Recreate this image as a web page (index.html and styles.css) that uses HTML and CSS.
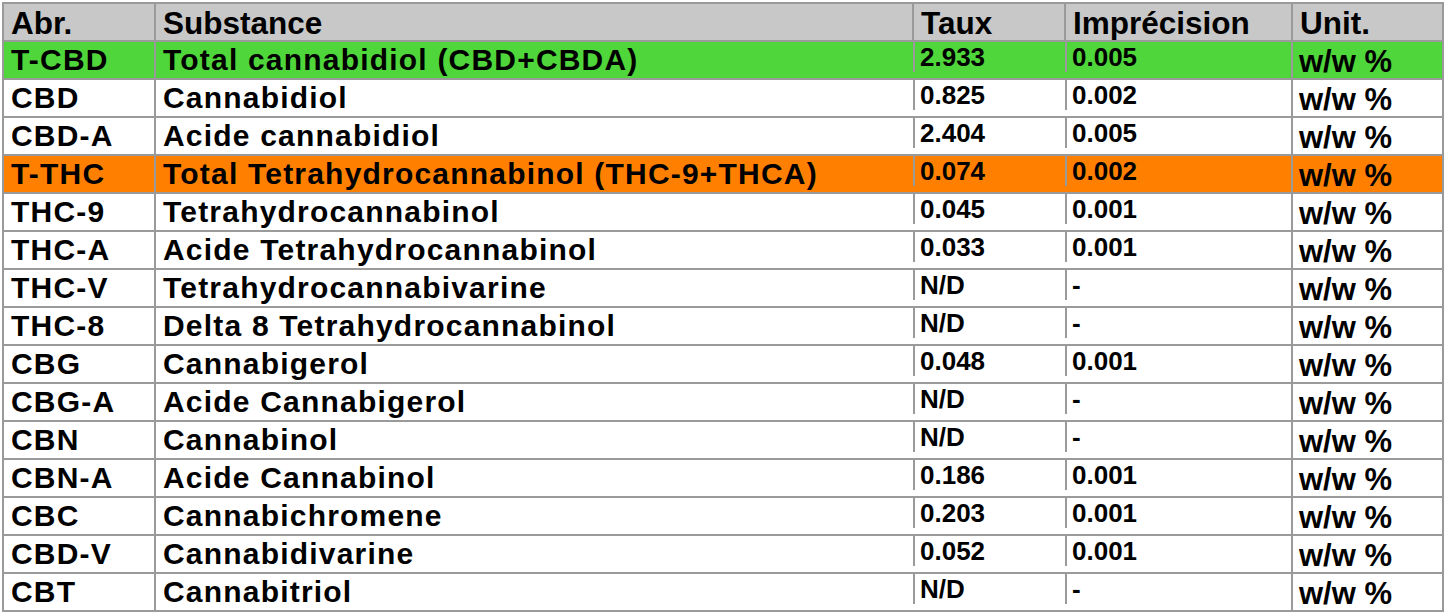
FILE: index.html
```html
<!DOCTYPE html>
<html lang="fr">
<head>
<meta charset="utf-8">
<title>Cannabinoïdes</title>
<link rel="stylesheet" href="styles.css">
</head>
<body>
<table class="results">
  <colgroup>
    <col class="c-abr">
    <col class="c-sub">
    <col class="c-taux">
    <col class="c-imp">
    <col class="c-unit">
  </colgroup>
  <thead>
    <tr class="head">
      <th>Abr.</th><th>Substance</th><th>Taux</th><th>Imprécision</th><th>Unit.</th>
    </tr>
  </thead>
  <tbody>
    <tr class="green"><td class="txt">T-CBD</td><td class="txt">Total cannabidiol (CBD+CBDA)</td><td class="num">2.933</td><td class="num">0.005</td><td class="unit">w/w %</td></tr>
    <tr><td class="txt">CBD</td><td class="txt">Cannabidiol</td><td class="num">0.825</td><td class="num">0.002</td><td class="unit">w/w %</td></tr>
    <tr><td class="txt">CBD-A</td><td class="txt">Acide cannabidiol</td><td class="num">2.404</td><td class="num">0.005</td><td class="unit">w/w %</td></tr>
    <tr class="orange"><td class="txt">T-THC</td><td class="txt">Total Tetrahydrocannabinol (THC-9+THCA)</td><td class="num">0.074</td><td class="num">0.002</td><td class="unit">w/w %</td></tr>
    <tr><td class="txt">THC-9</td><td class="txt">Tetrahydrocannabinol</td><td class="num">0.045</td><td class="num">0.001</td><td class="unit">w/w %</td></tr>
    <tr><td class="txt">THC-A</td><td class="txt">Acide Tetrahydrocannabinol</td><td class="num">0.033</td><td class="num">0.001</td><td class="unit">w/w %</td></tr>
    <tr><td class="txt">THC-V</td><td class="txt">Tetrahydrocannabivarine</td><td class="num">N/D</td><td class="num">-</td><td class="unit">w/w %</td></tr>
    <tr><td class="txt">THC-8</td><td class="txt">Delta 8 Tetrahydrocannabinol</td><td class="num">N/D</td><td class="num">-</td><td class="unit">w/w %</td></tr>
    <tr><td class="txt">CBG</td><td class="txt">Cannabigerol</td><td class="num">0.048</td><td class="num">0.001</td><td class="unit">w/w %</td></tr>
    <tr><td class="txt">CBG-A</td><td class="txt">Acide Cannabigerol</td><td class="num">N/D</td><td class="num">-</td><td class="unit">w/w %</td></tr>
    <tr><td class="txt">CBN</td><td class="txt">Cannabinol</td><td class="num">N/D</td><td class="num">-</td><td class="unit">w/w %</td></tr>
    <tr><td class="txt">CBN-A</td><td class="txt">Acide Cannabinol</td><td class="num">0.186</td><td class="num">0.001</td><td class="unit">w/w %</td></tr>
    <tr><td class="txt">CBC</td><td class="txt">Cannabichromene</td><td class="num">0.203</td><td class="num">0.001</td><td class="unit">w/w %</td></tr>
    <tr><td class="txt">CBD-V</td><td class="txt">Cannabidivarine</td><td class="num">0.052</td><td class="num">0.001</td><td class="unit">w/w %</td></tr>
    <tr><td class="txt">CBT</td><td class="txt">Cannabitriol</td><td class="num">N/D</td><td class="num">-</td><td class="unit">w/w %</td></tr>
  </tbody>
</table>
</body>
</html>
```
FILE: styles.css
```css
html, body {
  margin: 0;
  padding: 0;
  background: #ffffff;
}

body {
  padding: 2px 0 0 2px;
  font-family: "Liberation Sans", Arial, Helvetica, sans-serif;
  font-weight: bold;
  color: #000;
}

.results {
  border-collapse: collapse;
  table-layout: fixed;
  width: 1440px;
  border: 2px solid #9a9a9a;
}

.c-abr  { width: 152px; }
.c-sub  { width: 758px; }
.c-taux { width: 152px; }
.c-imp  { width: 227px; }
.c-unit { width: 151px; }

.results th,
.results td {
  border: 2px solid #9a9a9a;
  padding: 0 0 0 7px;
  vertical-align: top;
  text-align: left;
  white-space: nowrap;
  overflow: hidden;
}

.results tr {
  height: 38px;
}

.head th {
  background: #c8c8c8;
  font-size: 31.5px;
  line-height: 31px;
  padding-top: 4px;
  font-weight: bold;
}

.green td { background-color: #4fd63a; }
.orange td { background-color: #ff8000; }

.txt {
  font-size: 30px;
  line-height: 30px;
  padding-top: 3px !important;
  letter-spacing: 1.2px;
}

.num {
  font-size: 26px;
  line-height: 25px;
  padding-top: 3px !important;
  border-left-style: hidden !important;
  background-image: linear-gradient(#9a9a9a, #9a9a9a);
  background-repeat: no-repeat;
  background-size: 2px calc(100% - 6px);
  background-position: 0 0;
}

.unit {
  font-size: 31px;
  line-height: 30px;
  padding-top: 5px !important;
  padding-left: 6px !important;
}
```
